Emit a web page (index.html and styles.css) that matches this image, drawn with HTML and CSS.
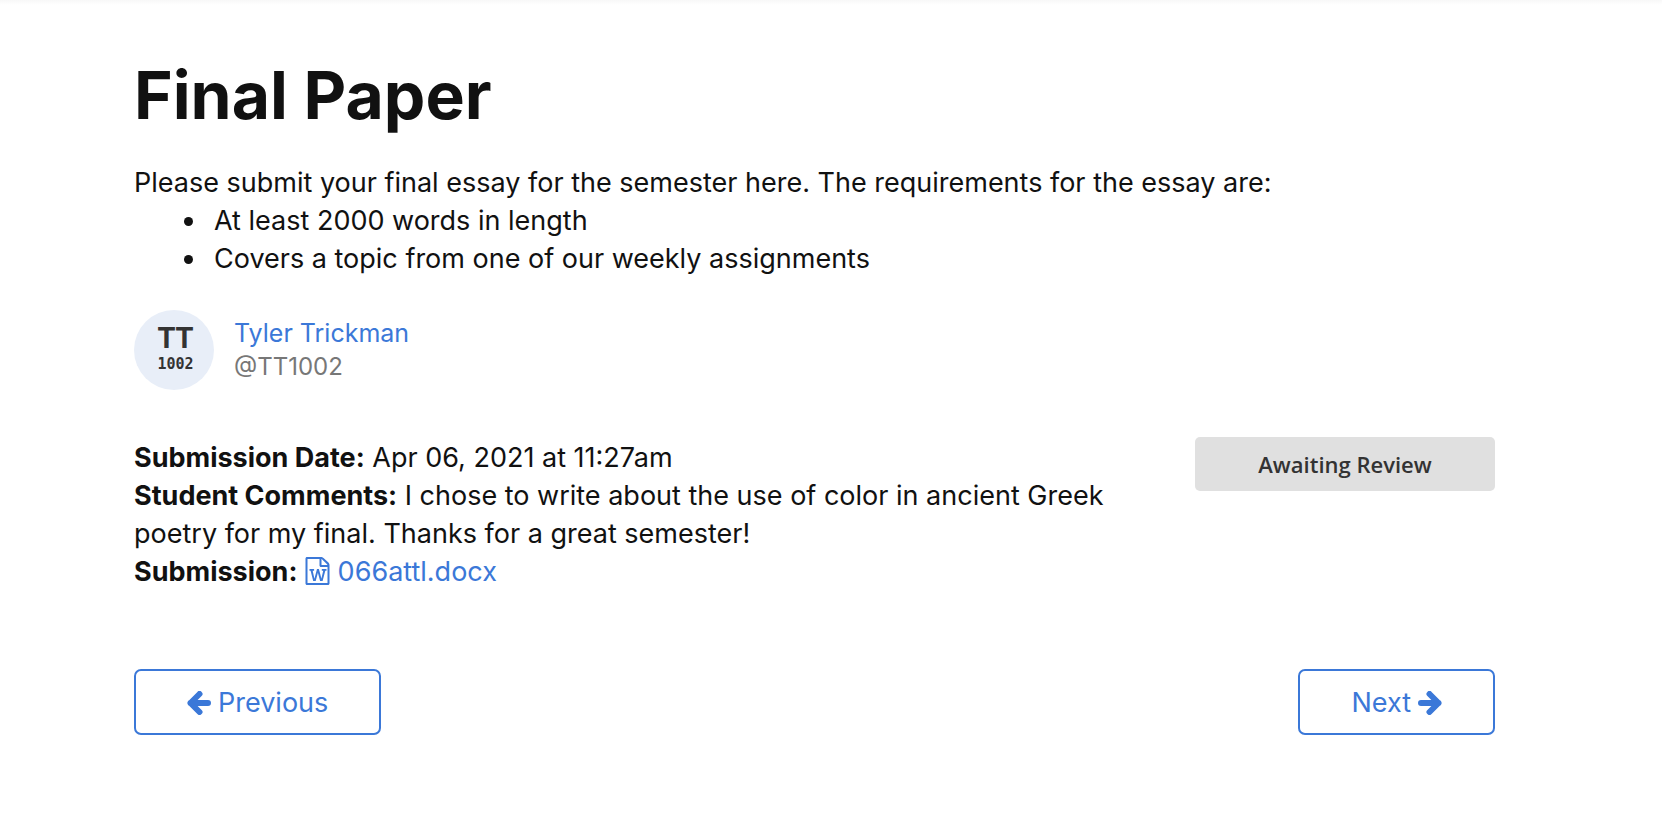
FILE: index.html
```html
<!DOCTYPE html>
<html lang="en">
<head>
<meta charset="utf-8">
<meta name="viewport" content="width=device-width, initial-scale=1">
<title>Final Paper</title>
<link rel="stylesheet" href="styles.css">
</head>
<body>
<main class="page">
  <h1 class="title">Final Paper</h1>
  <p class="intro">Please submit your final essay for the semester here. The requirements for the essay are:</p>
  <ul class="requirements">
    <li>At least 2000 words in length</li>
    <li>Covers a topic from one of our weekly assignments</li>
  </ul>
  <section class="student">
    <div class="avatar"><span class="initials">TT</span><span class="number">1002</span></div>
    <div class="identity">
      <a class="name" href="#">Tyler Trickman</a>
      <span class="handle">@TT1002</span>
    </div>
  </section>
  <section class="submission">
    <div class="details">
      <p><strong>Submission Date:</strong> Apr 06, 2021 at 11:27am</p>
      <p><strong>Student Comments:</strong> I chose to write about the use of color in ancient Greek poetry for my final. Thanks for a great semester!</p>
      <p><strong>Submission:</strong> <a href="#"><svg class="file-icon" viewBox="0 0 24 28" aria-hidden="true"><path d="M22.900 5.600c.6.6 1.100 1.700 1.100 2.500v18.400c0 .8-.7 1.500-1.500 1.500h-21C.7 28 0 27.300 0 26.500v-25C0 .7.7 0 1.500 0h14c.8 0 2 .5 2.500 1.100zM16 2.100V8h5.900c-.1-.3-.3-.6-.4-.7l-4.800-4.900c-.1-.1-.4-.3-.7-.3zM22 26V10h-6.500c-.8 0-1.500-.7-1.500-1.500V2H2v24zM4 12v1.700h1.100L7.700 24h2.500l2-7.500.2-1 .2 1 2 7.500h2.500L19.800 13.700H21V12h-4.700v1.700h1.400L16.100 20.700l-.1 1.100-.3-1.100L13.400 12h-1.900L9.200 20.700 8.900 21.800l-.2-1.100L7.200 13.700h1.400V12z"/></svg> 066attl.docx</a></p>
    </div>
    <div class="status">Awaiting Review</div>
  </section>
  <nav class="pager" aria-label="Submissions">
    <button class="step" type="button"><svg class="arrow" viewBox="0 0 24 24" aria-hidden="true"><path d="M12.500 3 3.500 12l9 9M3.500 12h17.500"/></svg>Previous</button>
    <button class="step" type="button">Next<svg class="arrow" viewBox="0 0 24 24" aria-hidden="true"><path d="m11.500 3 9 9-9 9M20.500 12H3"/></svg></button>
  </nav>
</main>
</body>
</html>
```
FILE: styles.css
```css
* { box-sizing: border-box; }
body {
  margin: 0;
  background: linear-gradient(#f8f8f8, #fff 5px);
  color: #111;
  font-family: Inter, "Liberation Sans", sans-serif;
  font-size: 27px;
  line-height: 38px;
}
p, ul, h1 { margin: 0; }
a { color: #3b78d8; text-decoration: none; }
strong { font-weight: 700; }
.page { padding: 53px 167px 83px 134px; }
.title {
  font-size: 66px;
  font-weight: 700;
  line-height: 84px;
  margin-bottom: 27px;
}
.requirements { padding-left: 74px; }
.requirements li { padding-left: 6px; }
.student {
  display: flex;
  align-items: center;
  gap: 20px;
  margin-top: 32px;
}
.avatar {
  display: flex;
  flex-direction: column;
  align-items: center;
  justify-content: center;
  width: 80px;
  height: 80px;
  padding: 0 0 4px 3px;
  border-radius: 50%;
  background: #e8eef8;
  color: #333;
}
.initials { font: 700 29px/31px Roboto, sans-serif; }
.number { font: 700 15px/20px "DejaVu Sans Mono", monospace; }
.identity {
  display: flex;
  flex-direction: column;
  font-size: 24px;
  line-height: 34px;
}
.name { font-size: 25px; }
.handle { color: #777; }
.submission {
  display: flex;
  align-items: flex-start;
  gap: 60px;
  margin-top: 47px;
}
.details { flex: 1; padding-top: 2px; }
.file-icon {
  width: 25px;
  height: 28px;
  fill: currentColor;
  vertical-align: -4px;
}
.status {
  width: 300px;
  border-radius: 5px;
  background: #e0e0e0;
  color: #333;
  font: 600 22px/54px "Open Sans", sans-serif;
  text-align: center;
}
.pager {
  display: flex;
  justify-content: space-between;
  margin-top: 78px;
}
.step {
  display: flex;
  align-items: center;
  gap: 7px;
  padding: 13px 51px 11px;
  border: 2px solid #3b78d8;
  border-radius: 7px;
  background: #fff;
  color: #3b78d8;
  font: inherit;
}
.arrow {
  width: 24px;
  height: 24px;
  fill: none;
  stroke: currentColor;
  stroke-width: 6;
  stroke-linecap: round;
  stroke-linejoin: round;
}
```
